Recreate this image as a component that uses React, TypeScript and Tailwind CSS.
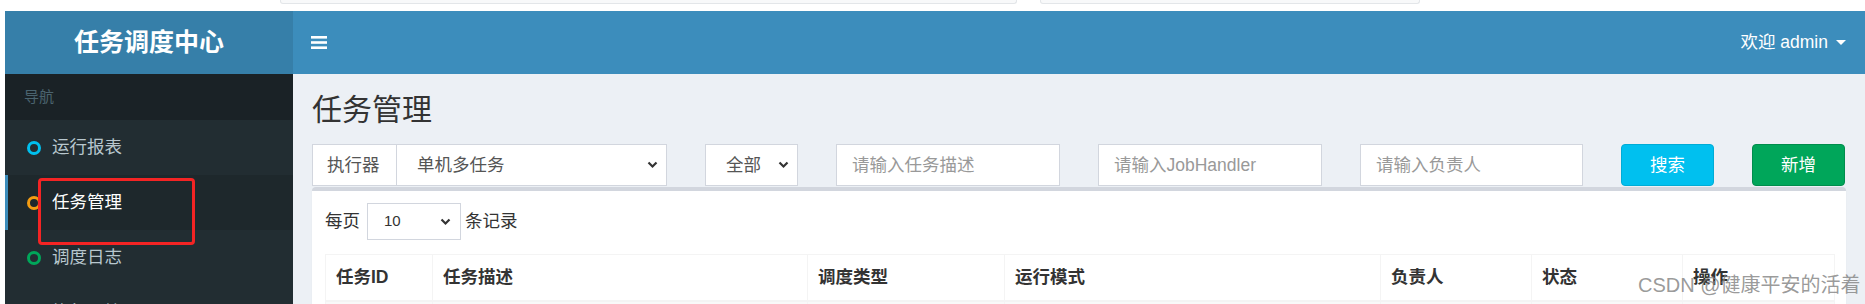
import * as React from "react";

const menu = [
  { label: "运行报表", ring: "border-[#00c0ef]", active: false },
  { label: "任务管理", ring: "border-[#f39c12]", active: true },
  { label: "调度日志", ring: "border-[#00a65a]", active: false },
  { label: "执行器管理", ring: "border-[#dd4b39]", active: false },
];

const columns = [
  { label: "任务ID", width: "w-[107px]" },
  { label: "任务描述", width: "w-[375px]" },
  { label: "调度类型", width: "w-[197px]" },
  { label: "运行模式", width: "w-[376px]" },
  { label: "负责人", width: "w-[151px]" },
  { label: "状态", width: "w-[151px]" },
  { label: "操作", width: "w-[152px]" },
];

function Chevron() {
  return (
    <svg width="11" height="8" viewBox="0 0 11 8" className="shrink-0">
      <polyline points="1.5,1.5 5.5,5.5 9.5,1.5" fill="none" stroke="#333" strokeWidth="2.2" />
    </svg>
  );
}

function Sidebar() {
  return (
    <div className="flex w-[288px] shrink-0 flex-col overflow-hidden">
      <div className="flex h-[63px] shrink-0 items-center justify-center bg-[#367fa9] text-[25px] font-bold text-white">
        任务调度中心
      </div>
      <div className="flex-1 overflow-hidden bg-[#222d32]">
        <div className="flex h-[46px] items-center bg-[#1a2226] pl-[19px] text-[15px] text-[#4b646f]">导航</div>
        {menu.map((item) => (
          <div
            key={item.label}
            className={
              item.active
                ? "flex h-[55px] items-center border-l-[3px] border-[#3c8dbc] bg-[#1e282c] pl-[19px] text-[17.5px] text-white"
                : "flex h-[55px] items-center border-l-[3px] border-transparent pl-[19px] text-[17.5px] text-[#b8c7ce]"
            }
          >
            <span className={`inline-block h-[14px] w-[14px] rounded-full border-[3px] ${item.ring}`} />
            <span className="ml-[11px]">{item.label}</span>
          </div>
        ))}
      </div>
    </div>
  );
}

function Navbar() {
  return (
    <div className="flex h-[63px] shrink-0 items-center justify-between bg-[#3c8dbc] pl-[18px] pr-[19px] text-white">
      <svg width="16" height="13" viewBox="0 0 16 13">
        <rect x="0" y="0" width="16" height="2.6" fill="white" />
        <rect x="0" y="5.2" width="16" height="2.6" fill="white" />
        <rect x="0" y="10.4" width="16" height="2.6" fill="white" />
      </svg>
      <div className="flex items-center text-[17.5px]">
        <span>欢迎 admin</span>
        <span className="ml-[8px] h-0 w-0 border-x-[5px] border-t-[5px] border-x-transparent border-t-white" />
      </div>
    </div>
  );
}

function Filters() {
  return (
    <div className="flex h-[42px] gap-[38px] text-[17.5px]">
      <div className="flex w-[355px] border border-[#d2d6de] bg-white">
        <div className="flex w-[84px] items-center border-r border-[#d2d6de] pl-[14px] text-[#555]">执行器</div>
        <div className="flex flex-1 items-center justify-between pl-[20px] pr-[8px] text-[#555]">
          <span>单机多任务</span>
          <Chevron />
        </div>
      </div>
      <div className="flex w-[93px] items-center justify-between border border-[#d2d6de] bg-white pl-[20px] pr-[8px] text-[#555]">
        <span>全部</span>
        <Chevron />
      </div>
      <div className="flex w-[224px] items-center border border-[#d2d6de] bg-white pl-[15px] text-[#999]">请输入任务描述</div>
      <div className="flex w-[224px] items-center border border-[#d2d6de] bg-white pl-[15px] text-[#999]">请输入JobHandler</div>
      <div className="flex w-[223px] items-center border border-[#d2d6de] bg-white pl-[15px] text-[#999]">请输入负责人</div>
      <div className="flex w-[93px] items-center justify-center rounded-[4px] border border-[#00acd6] bg-[#00c0ef] text-white">搜索</div>
      <div className="flex w-[93px] items-center justify-center rounded-[4px] border border-[#008d4c] bg-[#00a65a] text-white">新增</div>
    </div>
  );
}

function JobBox() {
  return (
    <div className="mt-[1px] rounded-[4px] border-t-[4px] border-[#d2d6de] bg-white px-[13px] pt-[12px] shadow-[0_1px_1px_rgba(0,0,0,0.1)]">
      <div className="flex h-[37px] items-center text-[17.5px] text-[#333]">
        <span>每页</span>
        <div className="ml-[7px] flex h-[37px] w-[94px] items-center justify-between border border-[#d2d6de] pl-[16px] pr-[9px] text-[15px]">
          <span>10</span>
          <Chevron />
        </div>
        <span className="ml-[4px]">条记录</span>
      </div>
      <table className="mt-[14px] w-full table-fixed border-collapse text-left text-[17.5px] text-[#333]">
        <thead>
          <tr className="h-[46px]">
            {columns.map((c) => (
              <th key={c.label} className={`${c.width} border border-b-2 border-[#f4f4f4] px-[10px] font-bold`}>
                {c.label}
              </th>
            ))}
          </tr>
        </thead>
        <tbody>
          <tr className="h-[46px] bg-[#f9f9f9]">
            {columns.map((c) => (
              <td key={c.label} className="border border-[#f4f4f4]" />
            ))}
          </tr>
        </tbody>
      </table>
    </div>
  );
}

export default function App() {
  return (
    <div className="relative h-[304px] w-[1865px] overflow-hidden bg-white font-['Liberation_Sans','Noto_Sans_CJK_SC',sans-serif] text-[#333]">
      <div className="flex h-[11px] items-start">
        <div className="ml-[280px] h-[4px] w-[737px] rounded-b-[3px] border-x border-b border-[#e3e6e9] bg-[#f8f9fa]" />
        <div className="ml-[23px] h-[4px] w-[380px] rounded-b-[3px] border-x border-b border-[#e3e6e9] bg-[#f8f9fa]" />
      </div>
      <div className="flex h-[293px] pl-[5px]">
        <Sidebar />
        <div className="flex flex-1 flex-col overflow-hidden">
          <Navbar />
          <div className="flex-1 bg-[#ecf0f5] px-[19px] pt-[19px]">
            <h1 className="text-[30px] leading-[33px] text-[#333]">任务管理</h1>
            <div className="mt-[18px]">
              <Filters />
              <JobBox />
            </div>
          </div>
        </div>
      </div>
      {/* screenshot annotation + watermark overlays */}
      <div className="pointer-events-none absolute left-[38px] top-[178px] h-[67px] w-[157px] rounded-[4px] border-[3px] border-[#f42424]" />
      <div className="pointer-events-none absolute left-[1638px] top-[272px] whitespace-nowrap text-[20px] leading-[26px] text-[#808080]/80">
        CSDN @健康平安的活着
      </div>
    </div>
  );
}
